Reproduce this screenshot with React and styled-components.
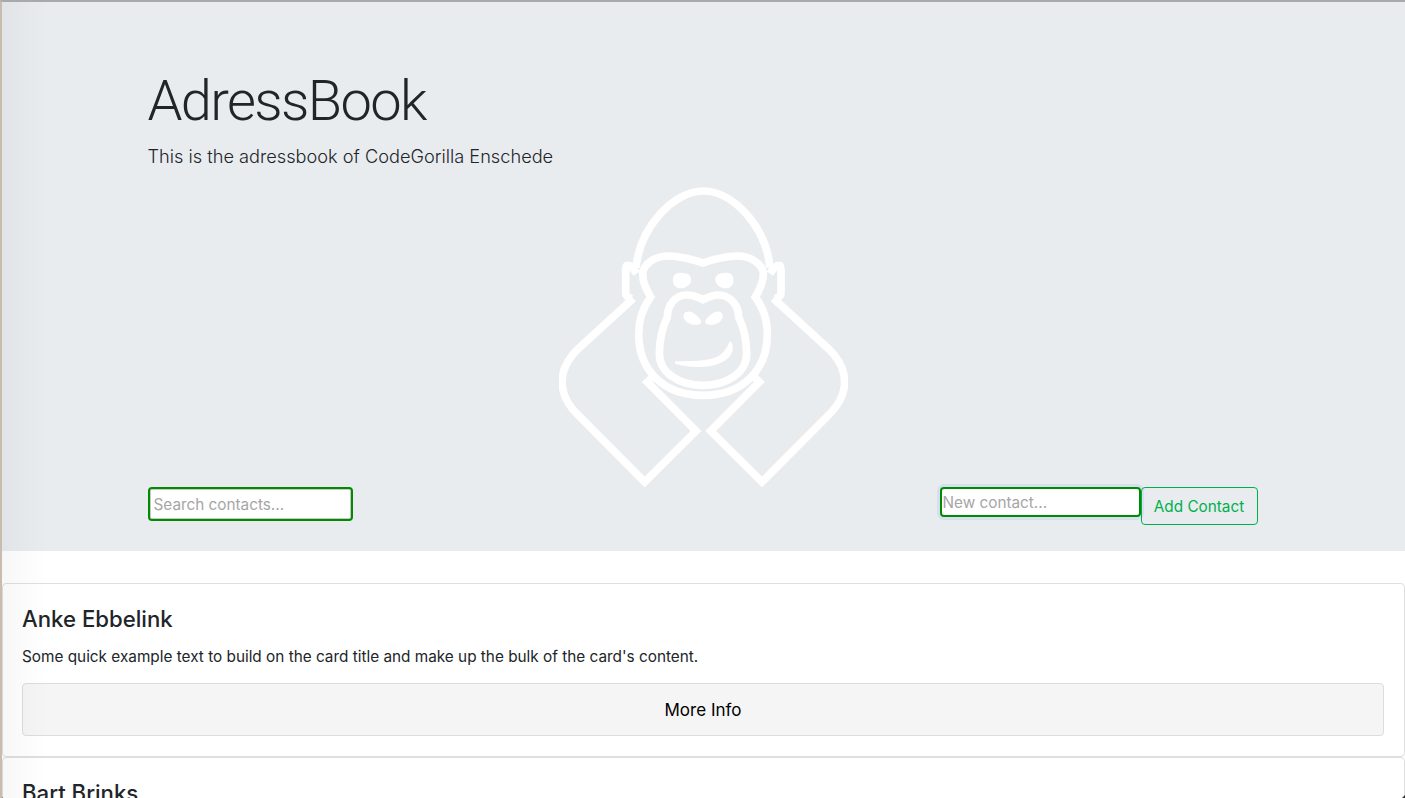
import React from "react";
import styled, { createGlobalStyle } from "styled-components";

const Global = createGlobalStyle`
  html, body { margin: 0; padding: 0; background: #fff; }
  * { box-sizing: border-box; }
  body { font-family: Inter, "Liberation Sans", sans-serif; color: #212529; }
`;

const Page = styled.div`
  position: relative;
  height: 798px;
  overflow: hidden;
  border-top: 2px solid #a9a9a9;
  border-left: 2px solid #c9bcae;
  &::before {
    content: "";
    position: absolute;
    inset: 0 auto 0 0;
    width: 46px;
    background: linear-gradient(90deg, rgba(0, 0, 0, 0.03), rgba(0, 0, 0, 0));
    pointer-events: none;
  }
`;

const Hero = styled.header`
  background: #e9ecef;
  padding: 65px 0 26px;
  margin-bottom: 32px;
`;

const Container = styled.div`
  width: 1110px;
  margin: 0 auto;
  transform: translateX(-1px);
`;

const Title = styled.h1`
  margin: 0 0 5px;
  font-family: Roboto, Inter, sans-serif;
  font-size: 56px;
  line-height: 69px;
  font-weight: 300;
  letter-spacing: -1.65px;
`;

const Lead = styled.p`
  margin: 0;
  font-size: 18.2px;
  line-height: 30px;
  font-weight: 300;
`;

const LogoWrap = styled.div`
  display: flex;
  justify-content: center;
  margin-top: 16px;
  padding-left: 2px;
`;

const ControlRow = styled.div`
  display: flex;
  justify-content: space-between;
  align-items: flex-start;
`;

const AddGroup = styled.div`
  display: flex;
  align-items: flex-start;
`;

const SearchInput = styled.input`
  width: 205px;
  height: 34px;
  padding: 0 4px;
  border: 2px solid #008a00;
  border-radius: 4px;
  box-shadow: inset 0 0 0 1px #c9c9c9;
  background: #fff;
  font: 400 15.3px Inter, "Liberation Sans", sans-serif;
  outline: none;
  &::placeholder { color: #a6a6a6; opacity: 1; }
`;

const NewInput = styled(SearchInput)`
  width: 201px;
  height: 30px;
  padding: 0 1px;
  box-shadow: 0 0 0 3px #d6dff0;
`;

const AddButton = styled.button`
  width: 117px;
  height: 38px;
  padding: 0;
  border: 1px solid #00b04f;
  border-radius: 4px;
  background: transparent;
  color: #00b04f;
  font: 400 15.3px Inter, "Liberation Sans", sans-serif;
`;

const Card = styled.article`
  border: 1px solid #dfdfdf;
  border-radius: 4px;
  padding: 20px 20px 20px 19px;
  height: 174px;
  background: #fff;
`;

const CardTitle = styled.h5`
  margin: 0 0 12px;
  font-size: 22.2px;
  line-height: 29px;
  font-weight: 500;
`;

const CardText = styled.p`
  margin: 0 0 14px;
  font-size: 15.33px;
  line-height: 24px;
  color: #212529;
`;

const InfoButton = styled.button`
  display: block;
  width: 100%;
  height: 53px;
  padding: 0;
  border: 1px solid #dddddd;
  border-radius: 4px;
  background: #f5f5f5;
  color: #000;
  font: 400 17px Inter, "Liberation Sans", sans-serif;
`;

const Corner = styled.span`
  position: absolute;
  bottom: 0;
  ${(p) => (p.$right ? "right: 0;" : "left: -2px;")}
  width: 3px;
  height: 3px;
  background: #333;
  clip-path: ${(p) =>
    p.$right ? "polygon(100% 0, 100% 100%, 0 100%)" : "polygon(0 0, 100% 100%, 0 100%)"};
`;

const Gorilla = () => (
  <svg width="288.7" height="300" viewBox="57 50 866 900" fill="none" stroke="#fff" strokeWidth="23">
    <path d="M288 292 C300 170 400 62 490 62 C580 62 678 170 690 292" />
    <path d="M280 384 L115 535 C50 597 50 672 115 735 L314 935 L468 782 L322 635 L338 620" />
    <path d="M290 310 C282 298 275 285 262 285 C258 285 257 295 257 300 L257 368 C257 378 262 382 276 385" />
    <g transform="translate(980 0) scale(-1 1)">
      <path d="M280 384 L115 535 C50 597 50 672 115 735 L314 935 L468 782 L322 635 L338 620" />
      <path d="M290 310 C282 298 275 285 262 285 C258 285 257 295 257 300 L257 368 C257 378 262 382 276 385" />
    </g>
    <path d="M489 278 C450 265 420 257 385 257 C340 257 308 285 308 312 C308 335 320 360 332 380 C310 410 296 450 296 490 C296 600 370 675 489 675 C608 675 682 600 682 490 C682 450 668 410 646 380 C658 360 670 335 670 312 C670 285 636 257 592 257 C556 257 526 265 489 278 Z" />
    <path d="M489 388 C470 378 455 374 440 374 C405 374 382 405 382 440 C368 470 358 510 358 550 C358 605 415 645 489 645 C563 645 620 605 620 550 C620 510 610 470 596 440 C596 405 570 374 535 374 C520 374 505 380 489 388 Z" />
    <g fill="#fff" stroke="none">
      <path d="M405 573 C470 572 520 572 545 550 C558 538 565 525 568 515 C575 510 580 525 578 540 C572 570 530 590 480 590 C450 590 420 585 405 580 Z" />
      <path d="M400 320 C405 305 420 305 440 310 C452 313 455 325 452 335 C447 350 425 358 412 352 C400 347 396 332 400 320 Z" />
      <path d="M432 430 C440 420 455 422 465 432 C475 440 485 450 483 458 C480 465 455 465 445 458 C435 452 428 440 432 430 Z" />
      <g transform="translate(979 0) scale(-1 1)">
        <path d="M400 320 C405 305 420 305 440 310 C452 313 455 325 452 335 C447 350 425 358 412 352 C400 347 396 332 400 320 Z" />
        <path d="M432 430 C440 420 455 422 465 432 C475 440 485 450 483 458 C480 465 455 465 445 458 C435 452 428 440 432 430 Z" />
      </g>
    </g>
  </svg>
);

const contacts = ["Anke Ebbelink", "Bart Brinks"];

export default function App() {
  return (
    <Page>
      <Global />
      <Hero>
        <Container>
          <Title>AdressBook</Title>
          <Lead>This is the adressbook of CodeGorilla Enschede</Lead>
          <LogoWrap>
            <Gorilla />
          </LogoWrap>
          <ControlRow>
            <SearchInput placeholder="Search contacts..." />
            <AddGroup>
              <NewInput placeholder="New contact..." />
              <AddButton>Add Contact</AddButton>
            </AddGroup>
          </ControlRow>
        </Container>
      </Hero>
      {contacts.map((name) => (
        <Card key={name}>
          <CardTitle>{name}</CardTitle>
          <CardText>Some quick example text to build on the card title and make up the bulk of the card's content.</CardText>
          <InfoButton>More Info</InfoButton>
        </Card>
      ))}
      <Corner />
      <Corner $right />
    </Page>
  );
}
